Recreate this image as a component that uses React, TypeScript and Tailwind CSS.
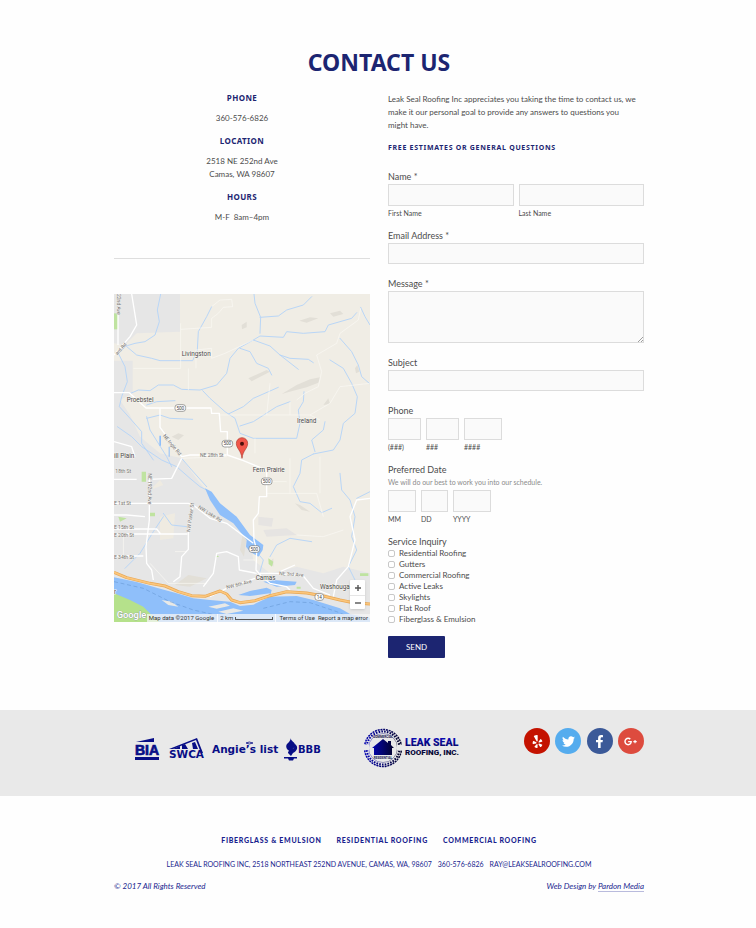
import { useId } from 'react';
import type { ReactNode } from 'react';
import { FaFacebookF, FaGooglePlusG, FaTwitter, FaYelp } from 'react-icons/fa';

const services = [
  'Residential Roofing',
  'Gutters',
  'Commercial Roofing',
  'Active Leaks',
  'Skylights',
  'Flat Roof',
  'Fiberglass & Emulsion',
];

const socials = [
  { name: 'Yelp', color: 'bg-[#c41200]', Icon: FaYelp },
  { name: 'Twitter', color: 'bg-[#55acee]', Icon: FaTwitter },
  { name: 'Facebook', color: 'bg-[#3b5998]', Icon: FaFacebookF },
  { name: 'Google Plus', color: 'bg-[#dd4b3e]', Icon: FaGooglePlusG },
];

const box = 'block w-full min-w-0 border border-[#dcdcdc] bg-[#fafafa] px-1 text-[8px] outline-none';

function InfoBlock({ title, children }: { title: string; children: ReactNode }) {
  return (
    <section className="mb-[10px] text-center">
      <h2 className="mb-[8px] font-['Noto_Sans',sans-serif] text-[8px] leading-[12px] font-bold tracking-wider text-[#1c2571]">
        {title}
      </h2>
      <div className="text-[#4c4c4c]">{children}</div>
    </section>
  );
}

function Field({ label, multiline = false }: { label: string; multiline?: boolean }) {
  const id = useId();
  return (
    <div className="mb-[13px]">
      <label htmlFor={id} className="block text-[9px] leading-[14px]">
        {label}
      </label>
      {multiline ? (
        <div className="relative">
          <textarea id={id} className={`${box} h-[52px] resize-none`} />
          <svg viewBox="0 0 5 5" className="absolute right-[1px] bottom-[1px] size-[5px]" aria-hidden="true">
            <path d="M0 5L5 0M3 5L5 3" stroke="#777" strokeWidth=".7" />
          </svg>
        </div>
      ) : (
        <input id={id} type="text" className={`${box} h-[21px]`} />
      )}
    </div>
  );
}

type Part = { caption: string; width: string };

function SplitField({ label, note, parts }: { label: string; note?: string; parts: Part[] }) {
  return (
    <fieldset className="mb-[11px]">
      <legend className="block text-[9px] leading-[14px]">{label}</legend>
      {note && <p className="mb-[3px] text-[7px] leading-[10px] text-[#8c8c8c]">{note}</p>}
      <div className="flex gap-[5px]">
        {parts.map((part) => (
          <label key={part.caption} className={`${part.width} flex flex-col-reverse gap-[2px]`}>
            <span className="text-[7px] leading-[10px]">{part.caption}</span>
            <input type="text" className={`${box} h-[22px]`} />
          </label>
        ))}
      </div>
    </fieldset>
  );
}

function Shield({ x, y, w = 32, children }: { x: number; y: number; w?: number; children: string }) {
  return (
    <g>
      <rect x={x - w / 2} y={y - 10} width={w} height="20" rx="8" fill="#fff" stroke="#777" strokeWidth="2" />
      <text x={x} y={y + 5} textAnchor="middle" fontSize="14" fill="#444" stroke="none">
        {children}
      </text>
    </g>
  );
}

function MapDrawing() {
  return (
    <svg
      viewBox="12 12 768 984"
      className="block w-full font-[Roboto,sans-serif]"
      role="img"
      aria-label="Map of Camas and Fern Prairie"
    >
      <rect x="12" y="12" width="768" height="984" fill="#f0ede5" />
      <path d="M12 12H210V125L80 130 45 165 12 160ZM12 212H68V310L30 330 60 375 90 440 150 490 215 505 270 580 330 650 420 745 430 810 480 850 560 830 640 850 700 830 780 850V996H12Z" fill="#e6e6e6" />
      <path d="M150 680L195 670 190 745 150 750ZM120 600L160 585 150 570Z" fill="#efebe1" />
      <path d="M445 680L490 685 485 710 445 705ZM460 720L530 715 560 735 470 740Z" fill="#e6e4e2" />
      <g fill="#e2dfd7">
        <path d="M515 312L560 285 600 268 630 262 625 278 590 292 550 302ZM395 105L410 95 410 112 396 118ZM185 440L205 430 222 436 205 450ZM415 265L470 240 480 245 425 274ZM568 92L600 82 625 85 590 98ZM660 70L690 62 700 72 670 80ZM640 345L655 325 660 342ZM735 235L742 225 748 245 738 250Z" />
        <path d="M390 780L400 720 410 740 402 800ZM195 885L235 855 290 865 240 890ZM555 640L570 645 600 665 575 660ZM480 815L490 805 490 830Z" />
      </g>
      <g fill="#bfe3a0">
        <path d="M12 70H24V118H12Z" />
        <path d="M95 545H108V575H95ZM118 668H135V679H118ZM25 680L50 685 30 695ZM318 795L328 800 318 802ZM560 890H572V896H560ZM750 850H775V858H750ZM475 805L490 815 486 830 476 822Z" />
      </g>

      {/* Streams */}
      <g fill="none" stroke="#b9d6f7" strokeWidth="3" strokeLinejoin="round" strokeLinecap="round">
        <path d="M152 12L142 60 148 95 135 135 105 155 75 160 48 168 25 190 45 230 52 275 35 320 28 350 60 385 95 425 95 460 130 510" />
        <path d="M48 168L80 195 125 205 150 212H248L262 180 265 125 290 80 305 50" />
        <path d="M62 310L85 300 120 302 145 285 190 285 215 298 270 300 320 285 350 250 360 205 385 175 430 150 450 138 520 142 530 125 580 130 645 125 655 105 725 85 740 68" />
        <path d="M432 12L435 40 452 82 450 130M450 82L505 78 530 60 580 45 605 20" />
        <path d="M390 175L420 185 440 220 475 235 485 255M430 150L480 168 510 195 565 238M510 195L540 205 595 208 610 218" />
        <path d="M278 302L300 325 345 365 375 385 390 430 430 445 560 445 570 400 565 360 580 335 582 305" />
        <path d="M355 372L400 350 430 325 505 292M390 408L430 395 500 350 540 335" />
        <path d="M690 145L725 185 745 225 755 260 780 282M660 210L700 235 725 280 742 320 735 370 700 400 690 450 670 480 610 492M645 395L640 420 605 450 615 485" />
        <path d="M752 52L765 80 780 105M110 345L140 335 195 332M110 385L150 375 180 385 248 388" />
        <path d="M22 410L65 440 95 470 155 510 200 530 240 565 270 590 290 600M110 380L120 420 170 500 185 530M215 505L245 540 290 590" />
        <path d="M610 492L575 510 570 550 550 590 570 635 600 640 635 668 665 655M690 550L695 600 720 630 735 680 725 740 740 780 715 830 735 870M780 605L740 625" />
        <path d="M480 800L500 765 540 745 605 755M45 835L90 790 130 725 160 680M160 670L185 705 230 710M435 780L460 810 450 845" />
      </g>

      {/* Lacamas Lake and the Columbia River */}
      <g fill="#8fbffa">
        <path d="M285 595L305 605 330 640 380 680 420 735 460 765 458 780 445 800 420 785 408 770 410 750 370 700 330 675 300 630Z" />
        <path d="M12 862L80 876 140 893 200 910 250 925 300 930 360 935 390 948 430 944 470 925 480 910 420 918 385 915 420 903 470 893 485 900 480 920 560 918 610 930 690 955 720 972 780 985V996H12Z" />
        <path d="M148 437H153V467H148ZM176 470H179V500H176ZM460 875L490 870 560 875 555 885 500 890Z" />
      </g>
      <path d="M12 910L60 930 100 950 125 975 150 990 145 996H12Z" fill="#b5e18b" />
      <path d="M155 930L185 935 205 950 175 945ZM295 950L345 940 360 947 320 956ZM325 965L370 955 400 962 350 972Z" fill="#e9e9e6" />
      <path d="M12 875L100 895 180 935 250 960 330 978 420 990M460 955L540 935 600 938 680 965 740 990" fill="none" stroke="#5f91cc" strokeWidth="1.5" strokeDasharray="12 8" />

      {/* Roads */}
      <g fill="none" stroke="#faf9f5" strokeWidth="2" strokeLinejoin="round">
        <path d="M212 100V235H70M305 50L330 30 365 28 368 50 340 52 325 70 305 85V112L212 118M258 235V180L305 175V205L345 190 430 150M235 235V300" />
        <path d="M752 55L745 90 690 130 680 160 620 195 635 245 625 290 585 310 560 330M325 375H600L660 340 690 290 780 280M540 335V375M600 375L630 390M470 375L480 280" />
        <path d="M435 445V490M540 505V610H470M630 500V610M540 610H620L640 680M560 735L640 740 700 720M470 575H530M215 505L350 500" />
        <path d="M12 800H68M40 735V800M195 785H230M120 820L175 880 290 880M400 810L435 810" />
      </g>
      <g fill="none" stroke="#fff" strokeWidth="4" strokeLinejoin="round">
        <path d="M65 12L80 105 60 140 12 195M24 70V165M12 308H58L108 354H303L305 370H328L332 425H352V495L400 512 470 540 470 620H448L445 670 430 690 432 750 440 780 438 840 460 865 480 880 530 890 540 900" />
        <path d="M150 355V412L215 500 240 495H350M215 505L185 565 115 568M12 568H80M12 640H235L250 645 300 685 350 700 430 760M12 675L50 675 105 680" />
        <path d="M118 550V690L108 770 110 820 125 840 130 870M12 717H140L152 732H12M250 645L235 710V778L215 800 210 860 190 875M12 798L100 798M152 732H232" />
        <path d="M280 890L310 850 320 790 350 785 385 800 388 840 440 850M435 865L350 895 300 920M450 850L500 850 580 858 610 895 660 915M780 625L740 630 720 680 735 750 715 830 680 870 670 920M510 845L555 825M12 455L65 470 75 500" />
      </g>
      <g fill="none" strokeLinejoin="round">
        <path d="M12 847L50 863 120 880 165 888 205 905 245 917 285 919 330 903 350 912 365 930 390 938 435 932 480 917 530 905 590 909 640 918 690 930 730 938 780 942" stroke="#e8a754" strokeWidth="9" />
        <path d="M12 847L50 863 120 880 165 888 205 905 245 917 285 919 330 903 350 912 365 930 390 938 435 932 480 917 530 905 590 909 640 918 690 930 730 938 780 942" stroke="#fbc67c" strokeWidth="5" />
      </g>

      {/* Place names */}
      <g fill="#4b4b4b" stroke="#f6f4ee" strokeWidth="3" paintOrder="stroke" fontSize="19">
        <text x="215" y="198">Livingston</text>
        <text x="50" y="336">Proebstel</text>
        <text x="561" y="398">Ireland</text>
        <text x="428" y="545">Fern Prairie</text>
        <text x="12" y="504">ill Plain</text>
        <text x="437" y="869">Camas</text>
        <text x="630" y="898">Washouga</text>
        <text x="12" y="912">r</text>
      </g>
      <g fill="#777" stroke="#f3f1ec" strokeWidth="2" paintOrder="stroke" fontSize="15">
        <text x="270" y="500">NE 28th St</text>
        <text x="16" y="549">18th St</text>
        <text x="12" y="645">E 1st St</text>
        <text x="12" y="717">E 15th St</text>
        <text x="12" y="740">E 20th St</text>
        <text x="12" y="806">E 34th St</text>
        <text transform="translate(158 438) rotate(50)">NE Ingle Rd</text>
        <text transform="translate(113 550) rotate(90)">NE 192nd Ave</text>
        <text transform="translate(240 727) rotate(-82)">NW Parker St</text>
        <text transform="translate(263 654) rotate(32)">NW Lake Rd</text>
        <text transform="translate(350 897) rotate(-14)">NW 6th Ave</text>
        <text transform="translate(507 855) rotate(4)">NE 3rd Ave</text>
        <text transform="translate(22 196) rotate(-48)">ard Rd</text>
        <text transform="translate(22 12) rotate(90)">22nd Ave</text>
      </g>
      <Shield x={211} y={354}>500</Shield>
      <Shield x={352} y={461}>500</Shield>
      <Shield x={470} y={574}>500</Shield>
      <Shield x={433} y={777}>500</Shield>
      <Shield x={628} y={921} w={26}>14</Shield>

      {/* Marker */}
      <path d="M396 505C393 480 379 476 379 460A17 17 0 0 1 413 460C413 476 399 480 396 505Z" fill="#f0564a" stroke="#b03a2e" strokeWidth="2" />
      <circle cx="396" cy="461" r="6" fill="#4a0f0a" />
      <text x="20" y="985" fontSize="28" fontWeight="500" fill="#fff" stroke="#8c96a0" strokeWidth="2" paintOrder="stroke">
        Google
      </text>
    </svg>
  );
}

function LocationMap() {
  return (
    <div className="relative font-[Roboto,sans-serif]">
      <MapDrawing />
      <div className="absolute right-[5px] bottom-[13px] flex w-[15px] flex-col rounded-[1px] bg-white text-[#555] shadow">
        <button type="button" aria-label="Zoom in" className="flex h-[15px] items-center justify-center">
          <svg viewBox="0 0 6 6" className="size-[6px]" aria-hidden="true">
            <path d="M3 0V6M0 3H6" stroke="currentColor" strokeWidth="1.4" />
          </svg>
        </button>
        <button type="button" aria-label="Zoom out" className="flex h-[14px] items-center justify-center border-t border-[#e6e6e6]">
          <svg viewBox="0 0 6 6" className="size-[6px]" aria-hidden="true">
            <path d="M0 3H6" stroke="currentColor" strokeWidth="1.4" />
          </svg>
        </button>
      </div>
      <div className="absolute right-0 bottom-0 flex h-[8px] items-center gap-[3px] bg-[#f5f5f5]/75 px-[2px] text-[6px] leading-[8px] whitespace-nowrap text-[#333]">
        <span>Map data ©2017 Google</span>
        <span className="flex items-center gap-[2px] border-x border-white/80 px-[2px]">
          2 km
          <span className="h-[3px] w-[38px] border-x border-b border-[#555]" />
        </span>
        <a href="#terms">Terms of Use</a>
        <a href="#report">Report a map error</a>
      </div>
    </div>
  );
}

function PartnerLogos() {
  return (
    <svg
      viewBox="0 0 190 24"
      className="h-[24px] w-[190px] font-['DejaVu_Sans',sans-serif]"
      fill="#080e86"
      role="img"
      aria-label="BIA, SWCA, Angie's List and BBB"
    >
      <path d="M2 4L20 0V4ZM1 19H25V22H1Z" />
      <text
        x="1"
        y="17"
        fontSize="14"
        fontWeight="700"
        stroke="#080e86"
        strokeWidth=".7"
        className="font-['Liberation_Sans',Arial,sans-serif]"
      >
        BIA
      </text>
      <path d="M35 11L63 0 69 15H67L62 2 39 11Z" />
      <path d="M39 11L46 8V11ZM48 11V7L51 6 54 11ZM58 5L61 4 64 11H59Z" />
      <text x="35" y="20" fontSize="10.500" fontWeight="700">SWCA</text>
      <text x="78" y="15" fontSize="10.500" fontWeight="700">Angie’s list</text>
      <path d="M112 5Q115 3 119 5Q115 7 112 5Z" fill="none" stroke="#080e86" strokeWidth=".8" />
      <path d="M157 0C156 3 162 4 161 8C160 11 157 11 157 14C153 12 151 9 153 6C155 4 156 3 157 0ZM161 6C165 9 163 13 159 15L157 18 154 15C154 12 158 12 160 10Q161 8 161 6ZM150 19H163V20.500H160L159 22.500H155L154 20.500H150Z" />
      <text x="164" y="15" fontSize="10" fontWeight="700">BBB</text>
    </svg>
  );
}

function CompanyLogo() {
  return (
    <svg
      viewBox="0 0 100 40"
      className="h-[40px] w-[100px] font-[Roboto,sans-serif]"
      role="img"
      aria-label="Leak Seal Roofing, Inc."
    >
      <defs>
        <linearGradient id="house" x1="0" x2="1">
          <stop stopColor="#0505b0" />
          <stop offset="1" stopColor="#03032a" />
        </linearGradient>
        <linearGradient id="name" gradientUnits="userSpaceOnUse" x1="0" x2="0" y1="10" y2="28">
          <stop stopColor="#0a0ab4" />
          <stop offset="1" stopColor="#05051e" />
        </linearGradient>
      </defs>
      <g fill="none" stroke="url(#house)">
        <circle cx="20" cy="20" r="18.500" strokeWidth="1.500" strokeDasharray="2 .8" />
        <circle cx="20" cy="20" r="16.500" strokeWidth="2" strokeDasharray="1.600 1.200" />
        <circle cx="20" cy="20" r="14.500" strokeWidth=".4" />
      </g>
      <path d="M0 17H6V22H0ZM34 17H40V22H34Z" fill="#e9e9e9" />
      <path d="M9 20L20 11 25 15V13H28V17L31 20H29V27H11V20Z" fill="url(#house)" />
      <text x="20" y="10" textAnchor="middle" fontSize="3" fontWeight="700" fill="#10104a">COMMERCIAL</text>
      <text x="20" y="31" textAnchor="middle" fontSize="3" fontWeight="700" fill="#10104a">RESIDENTIAL</text>
      <g fontWeight="900" fill="url(#name)">
        <text x="42" y="18" fontSize="10.500">LEAK SEAL</text>
        <text x="42" y="27" fontSize="8">ROOFING, INC.</text>
      </g>
    </svg>
  );
}

export default function App() {
  return (
    <div className="min-h-screen bg-[#fefefe] font-[Lato,sans-serif] text-[8px] leading-[13px] text-[#4c4c4c]">
      <main className="mx-auto max-w-[756px] pt-[46px] pr-[112px] pb-[52px] pl-[114px]">
        <h1 className="mb-[14px] text-center font-['Noto_Sans',sans-serif] text-[23px] leading-[32px] font-bold text-[#1c2571]">
          CONTACT US
        </h1>
        <div className="grid grid-cols-2 items-start gap-[18px]">
          <div>
            <InfoBlock title="PHONE">360-576-6826</InfoBlock>
            <InfoBlock title="LOCATION">
              2518 NE 252nd Ave
              <br />
              Camas, WA 98607
            </InfoBlock>
            <InfoBlock title="HOURS">M-F &nbsp;8am–4pm</InfoBlock>
            <hr className="mt-[34px] mb-[35px] border-[#dedede]" />
            <LocationMap />
          </div>

          <div>
            <p className="pt-[1px] pr-[6px]">
              Leak Seal Roofing Inc appreciates you taking the time to contact us, we make it our personal goal to
              provide any answers to questions you might have.
            </p>
            <h2 className="mt-[9px] mb-[16px] font-['Noto_Sans',sans-serif] text-[7px] leading-[13px] font-bold tracking-widest text-[#1c2571]">
              FREE ESTIMATES OR GENERAL QUESTIONS
            </h2>
            <form onSubmit={(event) => event.preventDefault()}>
              <SplitField
                label="Name *"
                parts={[
                  { caption: 'First Name', width: 'flex-1' },
                  { caption: 'Last Name', width: 'flex-1' },
                ]}
              />
              <Field label="Email Address *" />
              <Field label="Message *" multiline />
              <Field label="Subject" />
              <SplitField
                label="Phone"
                parts={[
                  { caption: '(###)', width: 'w-[33px]' },
                  { caption: '###', width: 'w-[33px]' },
                  { caption: '####', width: 'w-[38px]' },
                ]}
              />
              <SplitField
                label="Preferred Date"
                note="We will do our best to work you into our schedule."
                parts={[
                  { caption: 'MM', width: 'w-[28px]' },
                  { caption: 'DD', width: 'w-[27px]' },
                  { caption: 'YYYY', width: 'w-[38px]' },
                ]}
              />
              <fieldset>
                <legend className="block text-[9px] leading-[13px]">Service Inquiry</legend>
                {services.map((service) => (
                  <label key={service} className="flex h-[11px] items-center gap-[4px]">
                    <input
                      type="checkbox"
                      className="size-[7px] appearance-none rounded-[2px] border border-[#c8c8c8] bg-white checked:bg-[#1c2571]"
                    />
                    {service}
                  </label>
                ))}
              </fieldset>
              <button
                type="submit"
                className="mt-[11px] block h-[22px] w-[57px] rounded-[1px] bg-[#1c2571] text-[8px] text-white"
              >
                SEND
              </button>
            </form>
          </div>
        </div>
      </main>

      <section className="bg-[#e9e9e9]">
        <div className="mx-auto flex h-[86px] max-w-[756px] items-start justify-between pt-[18px] pr-[112px] pl-[134px]">
          <div className="pt-[10px]">
            <PartnerLogos />
          </div>
          <CompanyLogo />
          <nav aria-label="Social" className="ml-[22px] flex w-[120px] justify-between">
            {socials.map(({ name, color, Icon }) => (
              <a
                key={name}
                href={`#${name}`}
                aria-label={name}
                className={`${color} flex size-[26px] items-center justify-center rounded-full text-[13px] text-white`}
              >
                <Icon />
              </a>
            ))}
          </nav>
        </div>
      </section>

      <footer className="mx-auto max-w-[756px] pt-[38px] pr-[112px] pb-[35px] pl-[114px] text-[#1a1f8f]">
        <nav aria-label="Services" className="flex justify-center gap-[15px] text-[7px] font-black tracking-widest">
          <a href="#fiberglass">FIBERGLASS &amp; EMULSION</a>
          <a href="#residential">RESIDENTIAL ROOFING</a>
          <a href="#commercial">COMMERCIAL ROOFING</a>
        </nav>
        <address className="mt-[11px] flex justify-center gap-[6px] text-[7px] whitespace-nowrap not-italic">
          <span>LEAK SEAL ROOFING INC, 2518 NORTHEAST 252ND AVENUE, CAMAS, WA, 98607</span>
          <span>360-576-6826</span>
          <a href="mailto:ray@leaksealroofing.com">RAY@LEAKSEALROOFING.COM</a>
        </address>
        <div className="mt-[9px] flex justify-between italic">
          <p>© 2017 All Rights Reserved</p>
          <p>
            Web Design by{' '}
            <a href="#pardon-media" className="border-b border-[#b9bbdd]">
              Pardon Media
            </a>
          </p>
        </div>
      </footer>
    </div>
  );
}
